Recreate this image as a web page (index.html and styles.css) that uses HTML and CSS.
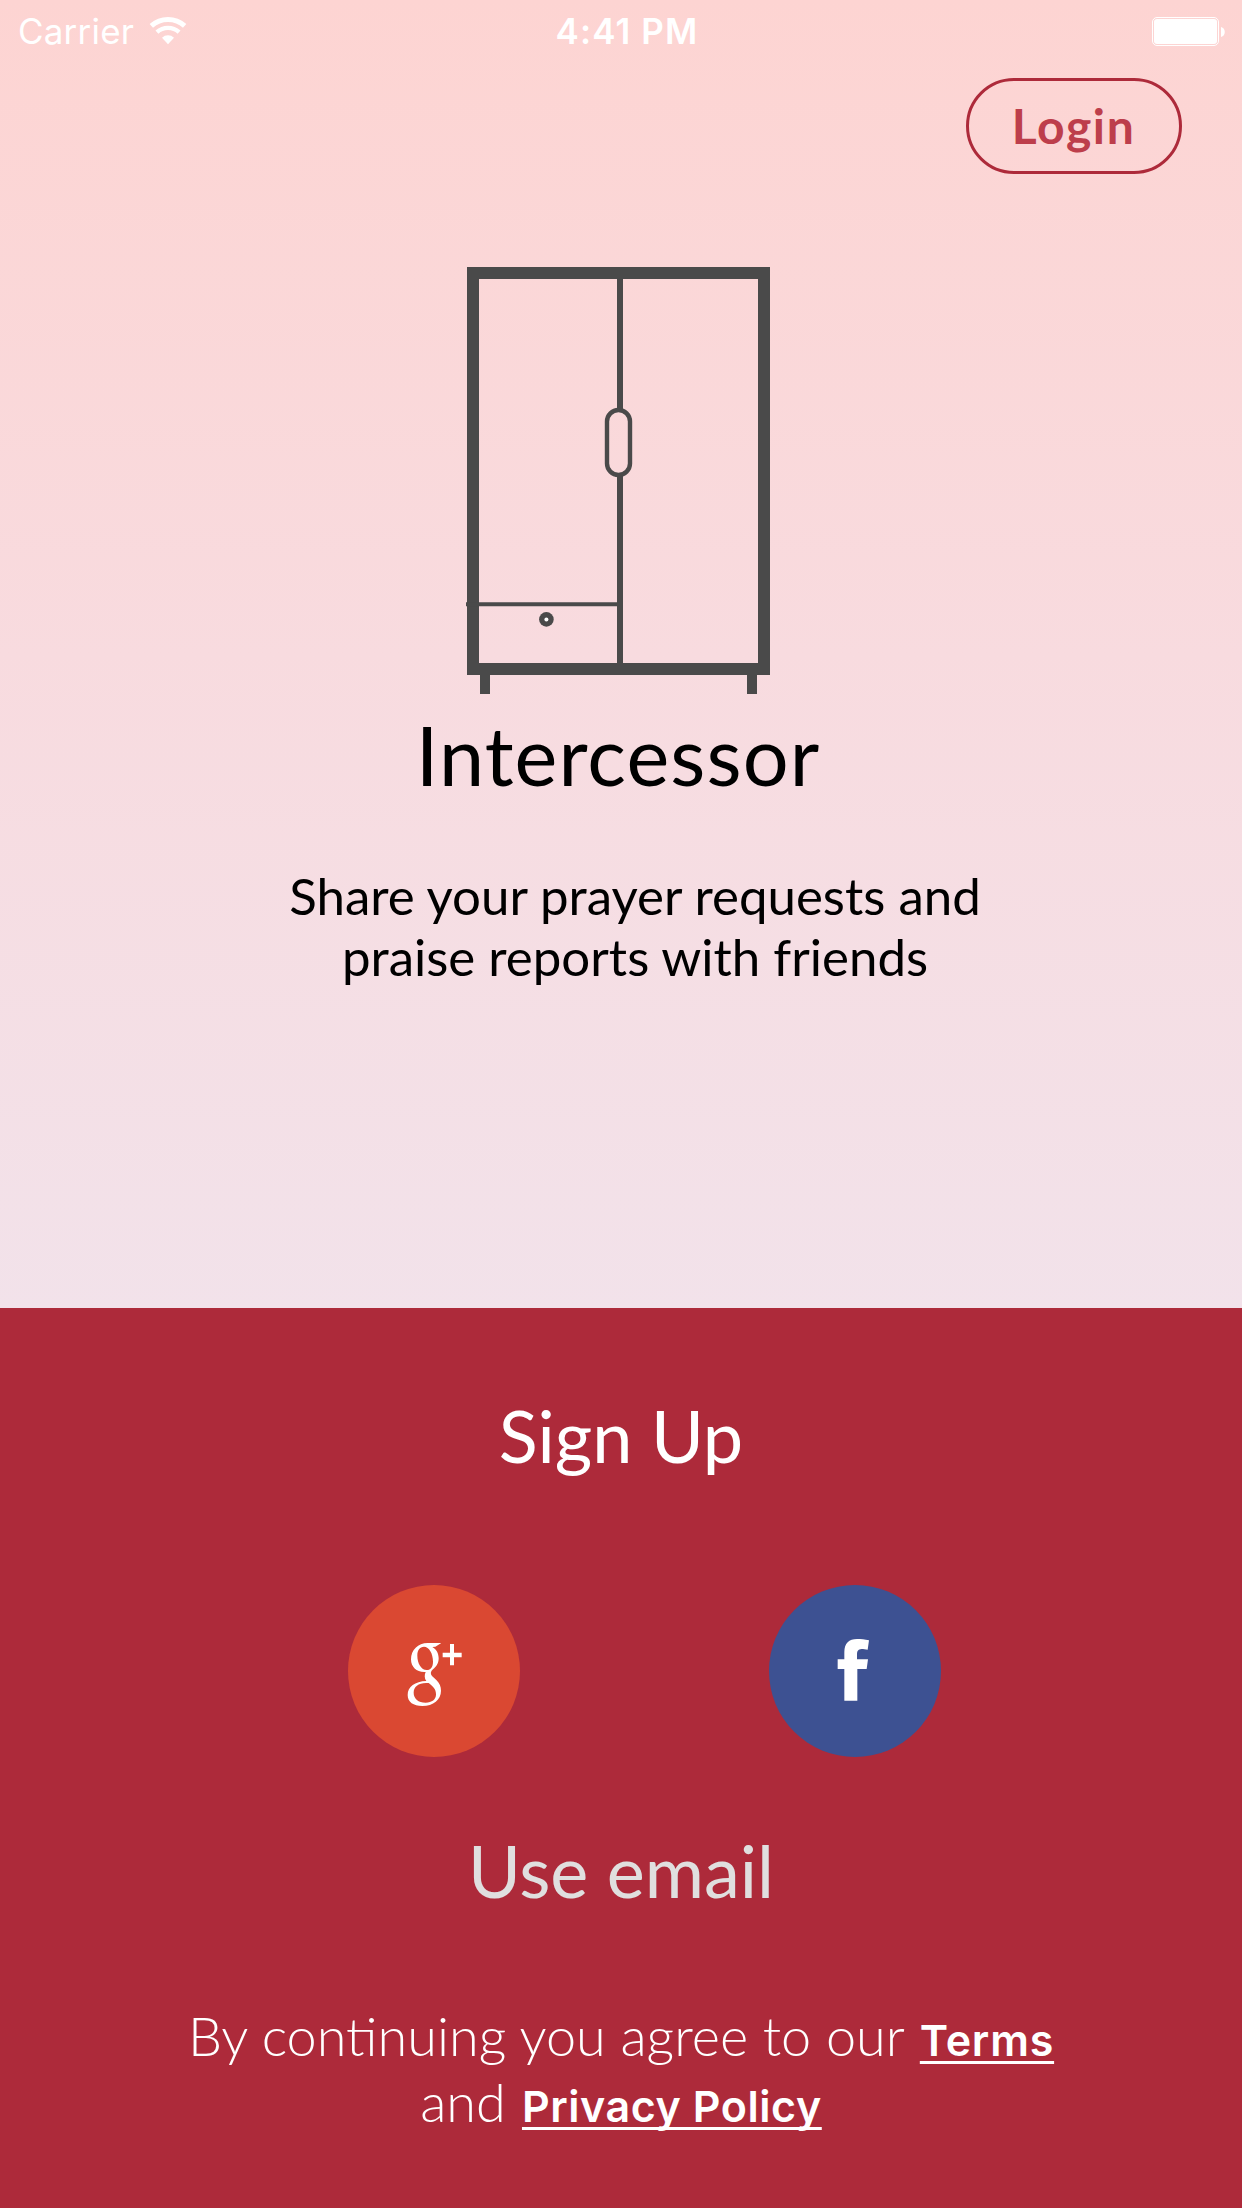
FILE: index.html
```
<!DOCTYPE html>
<html lang="en">
<head>
<meta charset="utf-8">
<title>Intercessor</title>
<link rel="stylesheet" href="styles.css">
</head>
<body>
<main class="screen">
  <section class="hero">
    <header class="status">
      <div class="status-left">
        <span>Carrier</span>
        <svg class="wifi" width="38" height="29" viewBox="448 45 114 87">
          <path d="M455 74.700A74.500 74.500 0 0 1 555 74.700" stroke-width="15"/>
          <path d="M471.800 93.300A49.500 49.500 0 0 1 538.200 93.300" stroke-width="13"/>
          <path class="dot" d="M505 130L487 110A27 27 0 0 1 523 110Z"/>
        </svg>
      </div>
      <time class="clock">4:41 PM</time>
      <div class="status-right">
        <svg width="73" height="29" viewBox="0 0 73 29" fill="#fff">
          <rect x=".5" y=".5" width="66" height="28" rx="4.500" fill="none" stroke="#fff"/>
          <rect x="2" y="2" width="63" height="25" rx="3"/>
          <path d="M69 10C74 11 74 19 69 20Z"/>
        </svg>
      </div>
    </header>
    <a class="login" href="#">Login</a>
    <svg class="wardrobe" width="304" height="427" viewBox="466 267 304 427">
      <g fill="none" stroke="#4a4a4a">
        <rect x="473" y="273" width="291" height="396" stroke-width="12"/>
        <path d="M620 279V410M620 475V669" stroke-width="6"/>
        <rect x="607" y="410" width="23" height="65" rx="11.500" stroke-width="4.400"/>
        <path d="M466 604.200H617" stroke-width="4"/>
        <path d="M485 675V694M752 675V694" stroke-width="10"/>
      </g>
      <circle cx="546.400" cy="619.400" r="7.300" fill="#4a4a4a"/>
      <circle cx="546.400" cy="619.400" r="2" fill="#fff"/>
    </svg>
    <h1 class="title">Intercessor</h1>
    <p class="tagline">Share your prayer requests and<br>praise reports with friends</p>
  </section>
  <section class="signup">
    <h2 class="heading">Sign Up</h2>
    <div class="providers">
      <a class="provider google" href="#" aria-label="Google Plus">
        <svg width="172" height="172" viewBox="24 45 516 516" fill="#fff">
          <path fill-rule="evenodd" d="M304 219L286 230L277 231C289 238 296 249 296 265C296 280 289 290 279 298C272 304 270 311 276 318L289 330C299 340 303 350 303 362C303 389 280 408 247 408C220 408 203 396 203 375C203 350 225 334 259 333C253 326 253 314 257 306C231 308 213 292 213 268C213 240 234 219 263 219ZM252 230C239 230 232 241 232 257C232 280 244 300 260 300C273 300 279 290 279 275C279 250 267 230 252 230ZM261 339C236 338 221 350 221 368C221 386 235 398 257 398C276 398 288 389 288 373C288 357 279 349 266 339Z"/>
          <path d="M330 222H342V248H365V262H342V286H330V262H308V248H330Z"/>
        </svg>
      </a>
      <a class="provider facebook" href="#" aria-label="Facebook">
        <svg width="172" height="172" viewBox="58 45 516 516" fill="#fff">
          <path d="M284 392H323V297H351L355 268H322V252C322 240 328 237 340 237L354 239L358 211C345 208 335 207 322 207C298 207 284 220 284 246V268H264V297H284Z"/>
        </svg>
      </a>
    </div>
    <a class="heading email" href="#">Use email</a>
    <p class="legal">By continuing you agree to our <a class="terms" href="#">Terms</a><br>and <a href="#">Privacy Policy</a></p>
  </section>
</main>
</body>
</html>
```
FILE: styles.css
```
body {
  margin: 0;
  font-family: Lato, sans-serif;
}

a {
  color: inherit;
  text-decoration: none;
}

.screen {
  display: flex;
  flex-direction: column;
  width: 1242px;
  height: 2208px;
  overflow: hidden;
}

.hero {
  box-sizing: border-box;
  display: flex;
  flex-direction: column;
  align-items: center;
  height: 1308px;
  background: linear-gradient(#fdd4d2, #f8dbdf 50%, #f2e2ea);
  color: #000;
}

.status {
  display: grid;
  grid-template-columns: 1fr auto 1fr;
  align-self: stretch;
  height: 62px;
  padding: 0 17px 0 18px;
  font: 400 35px/62px Inter, sans-serif;
  color: #fff;
}

.status-left {
  display: flex;
  align-items: center;
  gap: 15px;
  letter-spacing: 0.2px;
}

.wifi {
  margin-top: -2px;
  fill: none;
  stroke: #fff;
}

.wifi .dot {
  fill: #fff;
  stroke: none;
}

.clock {
  font-weight: 600;
  letter-spacing: 1.1px;
  padding-left: 11px;
}

.status-right {
  display: flex;
  justify-content: flex-end;
  align-items: center;
}

.login {
  box-sizing: border-box;
  align-self: flex-end;
  width: 216px;
  height: 96px;
  margin: 16px 60px 0 0;
  padding-right: 1px;
  border: 3px solid #ad2a3a;
  border-radius: 48px;
  font-size: 48px;
  font-weight: 700;
  line-height: 89px;
  letter-spacing: 1.6px;
  text-align: center;
  color: #bd3e4b;
}

.wardrobe {
  margin: 93px 6px 0 0;
}

.title {
  margin: 12px 0 0;
  padding-right: 6px;
  font-size: 81px;
  font-weight: 400;
  line-height: 97px;
  letter-spacing: 1.1px;
}

.tagline {
  margin: 62px 0 0;
  padding-left: 28px;
  font-size: 51px;
  line-height: 61px;
  text-align: center;
}

.signup {
  box-sizing: border-box;
  display: flex;
  flex-direction: column;
  align-items: center;
  height: 900px;
  padding-top: 84px;
  background: #ad2a3a;
  color: #fff;
}

.heading {
  margin: 0;
  font-size: 72px;
  font-weight: 400;
  line-height: 86px;
}

.providers {
  display: flex;
  gap: 249px;
  margin-top: 107px;
  padding-left: 47px;
}

.provider {
  width: 172px;
  height: 172px;
  border-radius: 50%;
}

.provider svg {
  display: block;
}

.google {
  background: #da4832;
}

.facebook {
  background: #3d5192;
}

.email {
  margin-top: 70px;
  color: #e0dfdf;
}

.legal {
  margin: 90px 0 0;
  font-size: 54px;
  font-weight: 300;
  line-height: 66px;
  text-align: center;
}

.legal a {
  margin-left: 1.5px;
  font: 600 43px/1 Inter, sans-serif;
  letter-spacing: 0.55px;
  text-decoration: underline;
  text-decoration-thickness: 3px;
  text-underline-offset: 5px;
  text-decoration-skip-ink: none;
}

.legal .terms {
  letter-spacing: 0.8px;
}
```
